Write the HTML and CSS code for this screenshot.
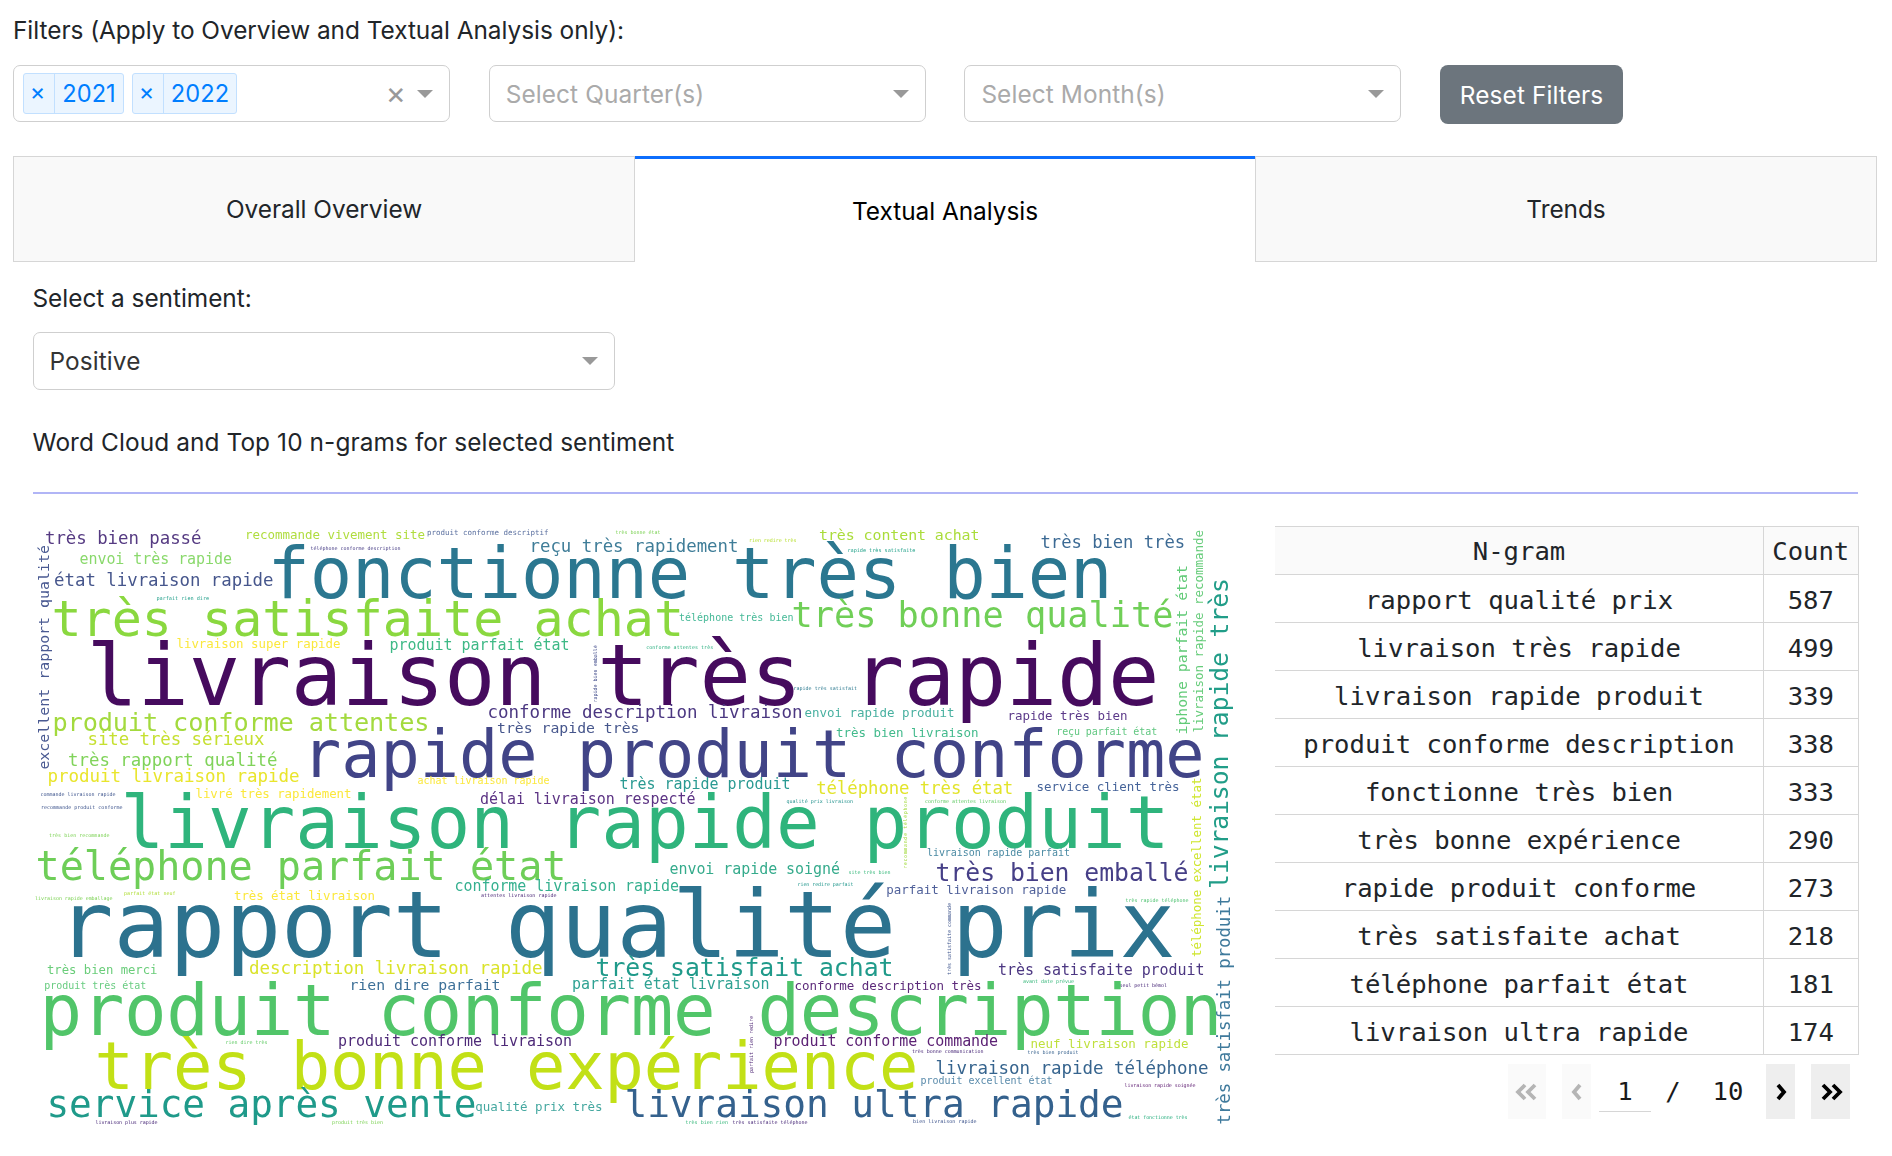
FILE: index.html
```html
<!DOCTYPE html>
<html lang="fr">
<head>
<meta charset="utf-8">
<title>Textual Analysis</title>
<link rel="stylesheet" href="styles.css">
</head>
<body>
<div class="app">
  <div class="line-label">Filters (Apply to Overview and Textual Analysis only):</div>
  <div class="filter-row">
    <div class="dd">
      <span class="chip"><span class="chip-x">×</span><span class="chip-val">2021</span></span>
      <span class="chip chip-b"><span class="chip-x">×</span><span class="chip-val">2022</span></span>
      <span class="dd-spacer"></span>
      <span class="dd-clear">×</span>
      <span class="dd-arrow"></span>
    </div>
    <div class="dd dd-plain"><span class="dd-ph">Select Quarter(s)</span><span class="dd-spacer"></span><span class="dd-arrow"></span></div>
    <div class="dd dd-plain"><span class="dd-ph">Select Month(s)</span><span class="dd-spacer"></span><span class="dd-arrow"></span></div>
    <button class="reset" type="button">Reset Filters</button>
  </div>

  <div class="tabs">
    <div class="tab">Overall Overview</div>
    <div class="tab tab-active">Textual Analysis</div>
    <div class="tab">Trends</div>
  </div>

  <div class="panel">
    <div class="line-label sent-label">Select a sentiment:</div>
    <div class="dd dd-plain dd-sent"><span class="dd-val">Positive</span><span class="dd-spacer"></span><span class="dd-arrow"></span></div>
    <div class="line-label wc-title">Word Cloud and Top 10 n-grams for selected sentiment</div>
    <div class="rule"></div>

    <div class="content">
      <svg class="wc" width="1210" height="626" viewBox="32.5 516 1210 624.5" preserveAspectRatio="none" role="img" aria-label="Word cloud">
        <text x="44.5" y="544" font-size="17.4" textLength="156.5" fill="#553a82">très bien passé</text>
        <text x="244.6" y="539" font-size="12.5" textLength="180" fill="#b0dd3f">recommande vivement site</text>
        <text x="426.5" y="535" font-size="7.5" textLength="121.5" fill="#5a6f9f">produit conforme descriptif</text>
        <text x="615" y="534" font-size="5" textLength="45" fill="#7ad151">très bonne état</text>
        <text x="310" y="550" font-size="5" textLength="90" fill="#443983">téléphone conforme description</text>
        <text x="267" y="598" font-size="70.5" textLength="845" fill="#2b7790">fonctionne très bien</text>
        <text x="529" y="552" font-size="17.4" textLength="209" fill="#3f7d98">reçu très rapidement</text>
        <text x="818.5" y="540" font-size="14.9" textLength="160.5" fill="#aadc3a">très content achat</text>
        <text x="1040" y="548" font-size="17.2" textLength="144.6" fill="#3c6a94">très bien très</text>
        <text x="748.5" y="542" font-size="5" textLength="47.5" fill="#b5de2b">rien redire très</text>
        <text x="847" y="552" font-size="5.2" textLength="68" fill="#1fa088">rapide très satisfaite</text>
        <text x="1202.5" y="732" font-size="12.5" textLength="202" transform="rotate(-90 1202.5 732)" fill="#66cc7a">livraison rapide recommande</text>
        <text x="1187" y="734" font-size="14.8" textLength="169" transform="rotate(-90 1187 734)" fill="#62cb78">iphone parfait état</text>
        <text x="1228" y="888" font-size="24.6" textLength="310" transform="rotate(-90 1228 888)" fill="#219d88">livraison rapide très</text>
        <text x="1230" y="1123" font-size="17.3" textLength="228" transform="rotate(-90 1230 1123)" fill="#3f7a9c">très satisfait produit</text>
        <text x="1201" y="956" font-size="12.4" textLength="179" transform="rotate(-90 1201 956)" fill="#cfe62f">téléphone excellent état</text>
        <text x="51" y="636" font-size="50" textLength="632.6" fill="#8ad83f">très satisfaite achat</text>
        <text x="678.5" y="620.7" font-size="10" textLength="114.5" fill="#45b997">téléphone très bien</text>
        <text x="791" y="627" font-size="35.3" textLength="382" fill="#70cf57">très bonne qualité</text>
        <text x="53.6" y="586" font-size="17.4" textLength="219.4" fill="#46568c">état livraison rapide</text>
        <text x="79" y="564" font-size="15" textLength="152.5" fill="#8ad96c">envoi très rapide</text>
        <text x="48.5" y="769" font-size="14.9" textLength="224" transform="rotate(-90 48.5 769)" fill="#4a5a92">excellent rapport qualité</text>
        <text x="156" y="600" font-size="5.2" textLength="52.6" fill="#1f9e89">parfait rien dire</text>
        <text x="86" y="705" font-size="85.5" textLength="1073" fill="#460b5e">livraison très rapide</text>
        <text x="176" y="648" font-size="12.4" textLength="164" fill="#fbe83c">livraison super rapide</text>
        <text x="389" y="650" font-size="15" textLength="180" fill="#3eb986">produit parfait état</text>
        <text x="596.5" y="702" font-size="5" textLength="57" transform="rotate(-90 596.5 702)" fill="#3e4989">rapide bien emballé</text>
        <text x="487" y="718" font-size="17.5" textLength="315" fill="#4b3781">conforme description livraison</text>
        <text x="804" y="717" font-size="12.5" textLength="150" fill="#48b0a0">envoi rapide produit</text>
        <text x="1007" y="720" font-size="12.5" textLength="120" fill="#5c3a8a">rapide très bien</text>
        <text x="645.7" y="649" font-size="5" textLength="67" fill="#29af7f">conforme attentes très</text>
        <text x="793" y="690" font-size="5" textLength="63.5" fill="#2a788e">rapide très satisfait</text>
        <text x="52" y="730" font-size="25.3" textLength="377" fill="#a3da3e">produit conforme attentes</text>
        <text x="87" y="744" font-size="17.4" textLength="177" fill="#c6e030">site très sérieux</text>
        <text x="496.5" y="732.7" font-size="14.8" textLength="142.5" fill="#46568c">très rapide très</text>
        <text x="301.5" y="776" font-size="65.3" textLength="902.5" fill="#414487">rapide produit conforme</text>
        <text x="835.5" y="736.7" font-size="12.5" textLength="142.5" fill="#42ba8c">très bien livraison</text>
        <text x="1055.7" y="734" font-size="10" textLength="101" fill="#60c780">reçu parfait état</text>
        <text x="67.5" y="765" font-size="17.4" textLength="209.5" fill="#80d35a">très rapport qualité</text>
        <text x="47" y="781.7" font-size="17.5" textLength="252" fill="#e9e52c">produit livraison rapide</text>
        <text x="417" y="783" font-size="10" textLength="132" fill="#fbe83c">achat livraison rapide</text>
        <text x="619" y="788" font-size="15" textLength="171" fill="#2a9a92">très rapide produit</text>
        <text x="815.7" y="793" font-size="17.3" textLength="197" fill="#e2e42a">téléphone très état</text>
        <text x="1036" y="790.7" font-size="12.5" textLength="143" fill="#46649a">service client très</text>
        <text x="40" y="795" font-size="5" textLength="75" fill="#3b528b">commande livraison rapide</text>
        <text x="195" y="797" font-size="12.4" textLength="156" fill="#fbe83c">livré très rapidement</text>
        <text x="479.5" y="803" font-size="15" textLength="215.5" fill="#5c3384">délai livraison respecté</text>
        <text x="786" y="802.7" font-size="5" textLength="66.5" fill="#21918c">qualité prix livraison</text>
        <text x="924.5" y="802.7" font-size="5" textLength="81" fill="#5ec962">conforme attentes livraison</text>
        <text x="40.5" y="808" font-size="5" textLength="81.5" fill="#3b528b">recommande produit conforme</text>
        <text x="48.5" y="836.7" font-size="5" textLength="60.5" fill="#7ad151">très bien recommande</text>
        <text x="907" y="868" font-size="5" textLength="72" transform="rotate(-90 907 868)" fill="#a0da39">recommande téléphone</text>
        <text x="120" y="847.7" font-size="72.7" textLength="1049" fill="#2fb47c">livraison rapide produit</text>
        <text x="35" y="879" font-size="40.2" textLength="531" fill="#6ece58">téléphone parfait état</text>
        <text x="454" y="890" font-size="15" textLength="224.5" fill="#35b08f">conforme livraison rapide</text>
        <text x="669" y="873" font-size="15" textLength="170.5" fill="#35ab8c">envoi rapide soigné</text>
        <text x="848" y="873" font-size="5" textLength="42" fill="#35b779">site très bien</text>
        <text x="926.5" y="855" font-size="10" textLength="143" fill="#4a8aa3">livraison rapide parfait</text>
        <text x="935" y="880" font-size="24.8" textLength="253" fill="#463f87">très bien emballé</text>
        <text x="885.7" y="893" font-size="12.5" textLength="180" fill="#50619a">parfait livraison rapide</text>
        <text x="797" y="885" font-size="5" textLength="56" fill="#1f968b">rien redire parfait</text>
        <text x="34.6" y="899" font-size="5" textLength="77.4" fill="#7ad151">livraison rapide emballage</text>
        <text x="123.6" y="894" font-size="5" textLength="51.4" fill="#addc30">parfait état neuf</text>
        <text x="233.5" y="899" font-size="12.4" textLength="141" fill="#fbe83c">très état livraison</text>
        <text x="480.6" y="896" font-size="5" textLength="75.4" fill="#482475">attentes livraison rapide</text>
        <text x="57" y="956" font-size="93" textLength="1118" fill="#2c728e">rapport qualité prix</text>
        <text x="1125" y="900.7" font-size="5" textLength="63" fill="#4ac16d">très rapide téléphone</text>
        <text x="951" y="974" font-size="5" textLength="72" transform="rotate(-90 951 974)" fill="#3b528b">très satisfaite commande</text>
        <text x="46.5" y="972.7" font-size="12.3" textLength="110.5" fill="#6acd7a">très bien merci</text>
        <text x="248.5" y="972.7" font-size="17.5" textLength="293.5" fill="#dae32a">description livraison rapide</text>
        <text x="595" y="975" font-size="24.8" textLength="298" fill="#1f9a8a">très satisfait achat</text>
        <text x="997.6" y="974" font-size="15" textLength="206.4" fill="#4c3782">très satisfaite produit</text>
        <text x="43.7" y="988" font-size="10" textLength="102" fill="#68cc80">produit très état</text>
        <text x="349" y="989" font-size="14.8" textLength="151" fill="#3d7098">rien dire parfait</text>
        <text x="571.6" y="988" font-size="15" textLength="197.4" fill="#2fa293">parfait état livraison</text>
        <text x="794" y="989" font-size="12.5" textLength="187" fill="#5c2a7a">conforme description très</text>
        <text x="1022.5" y="981.7" font-size="5" textLength="51" fill="#35b779">avant date prévue</text>
        <text x="1119" y="986" font-size="5" textLength="47.5" fill="#482878">seul petit bémol</text>
        <text x="39" y="1034" font-size="70.8" textLength="1183" fill="#51c569">produit conforme description</text>
        <text x="225" y="1043" font-size="5" textLength="42" fill="#5ec962">rien dire très</text>
        <text x="337.5" y="1045" font-size="15" textLength="234" fill="#4e2a78">produit conforme livraison</text>
        <text x="773" y="1045" font-size="15" textLength="224.6" fill="#5c2274">produit conforme commande</text>
        <text x="1030" y="1046.7" font-size="12.5" textLength="158" fill="#bfe03c">neuf livraison rapide</text>
        <text x="753" y="1071.7" font-size="5" textLength="57" transform="rotate(-90 753 1071.7)" fill="#481f70">parfait rien redire</text>
        <text x="911.4" y="1052" font-size="5" textLength="71.6" fill="#482878">très bonne communication</text>
        <text x="1027" y="1053" font-size="5" textLength="51" fill="#35608d">très bien produit</text>
        <text x="94" y="1087.2" font-size="65.4" textLength="824" fill="#c2e016">très bonne expérience</text>
        <text x="935" y="1072.7" font-size="17.5" textLength="273" fill="#36648e">livraison rapide téléphone</text>
        <text x="920" y="1083" font-size="10" textLength="132" fill="#5a8bab">produit excellent état</text>
        <text x="1124" y="1085.7" font-size="5" textLength="71" fill="#5c1a70">livraison rapide soignée</text>
        <text x="46" y="1116" font-size="37.7" textLength="430" fill="#1f9a8a">service après vente</text>
        <text x="474.7" y="1110" font-size="12.5" textLength="127.3" fill="#45a8a0">qualité prix très</text>
        <text x="624" y="1116" font-size="37.8" textLength="499" fill="#34618d">livraison ultra rapide</text>
        <text x="1128" y="1118" font-size="5" textLength="59" fill="#29af7f">état fonctionne très</text>
        <text x="95" y="1123" font-size="5" textLength="62" fill="#482878">livraison plus rapide</text>
        <text x="331.6" y="1123" font-size="5" textLength="51" fill="#7ad151">produit très bien</text>
        <text x="685" y="1123" font-size="5" textLength="42.5" fill="#35b779">très bien rien</text>
        <text x="732" y="1123" font-size="5" textLength="75" fill="#482878">très satisfaite téléphone</text>
        <text x="912.6" y="1122" font-size="5" textLength="63.4" fill="#3b528b">bien livraison rapide</text>
      </svg>

      <div class="side">
        <table class="grid">
          <thead><tr><th class="c-gram">N-gram</th><th class="c-count">Count</th></tr></thead>
          <tbody>
            <tr><td>rapport qualité prix</td><td>587</td></tr>
            <tr><td>livraison très rapide</td><td>499</td></tr>
            <tr><td>livraison rapide produit</td><td>339</td></tr>
            <tr><td>produit conforme description</td><td>338</td></tr>
            <tr><td>fonctionne très bien</td><td>333</td></tr>
            <tr><td>très bonne expérience</td><td>290</td></tr>
            <tr><td>rapide produit conforme</td><td>273</td></tr>
            <tr><td>très satisfaite achat</td><td>218</td></tr>
            <tr><td>téléphone parfait état</td><td>181</td></tr>
            <tr><td>livraison ultra rapide</td><td>174</td></tr>
          </tbody>
        </table>
        <div class="pager">
          <span class="pg pg-wide pg-off"><svg width="24" height="20" viewBox="0 0 24 20"><path d="M10 3 3 10l7 7M20 3l-7 7 7 7"/></svg></span>
          <span class="pg pg-off pg-prev"><svg width="12" height="20" viewBox="0 0 12 20"><path d="M9 3 3 10l6 7"/></svg></span>
          <span class="pg-input">1</span>
          <span class="pg-slash">/</span>
          <span class="pg-total">10</span>
          <span class="pg"><svg width="12" height="20" viewBox="0 0 12 20"><path d="m3 3 6 7-6 7"/></svg></span>
          <span class="pg pg-wide pg-last"><svg width="24" height="20" viewBox="0 0 24 20"><path d="m4 3 7 7-7 7M14 3l7 7-7 7"/></svg></span>
        </div>
      </div>
    </div>
  </div>
</div>
</body>
</html>
```

FILE: styles.css
```css
* { box-sizing: border-box; }
html, body { margin: 0; padding: 0; background: #fff; }
body {
  font-family: Inter, "Liberation Sans", sans-serif;
  font-size: 24.4px;
  letter-spacing: -0.03px;
  color: #212529;
}
.app { padding: 11px 15px 0 13px; width: 1892px; }
.line-label { line-height: 38px; height: 38px; }

.filter-row { display: flex; align-items: flex-start; margin-top: 16px; }
.dd {
  display: flex; align-items: center;
  width: 437px; height: 57px; padding: 0 16px 0 9px;
  margin-right: 38.7px;
  border: 1px solid #cfcfcf; border-radius: 7px; background: #fff;
  letter-spacing: 0.1px;
}
.dd-plain { padding-left: 16px; }
.dd-spacer { flex: 1; }
.dd-ph { color: #aaa; }
.dd-val { color: #333; }
.dd-arrow {
  width: 0; height: 0;
  border-left: 8px solid transparent; border-right: 8px solid transparent;
  border-top: 8px solid #999;
}
.dd-clear { color: #999; font-size: 31px; line-height: 1; margin-right: 11px; margin-top: -2px; }
.chip {
  display: flex; height: 41px; font-size: 23.6px;
  border: 1px solid #c2e0ff; border-radius: 3px;
  background: #ebf5ff; color: #007eff;
}
.chip-b { margin-left: 8px; }
.chip-x { width: 31px; padding-right: 3px; line-height: 36px; text-align: center; border-right: 1px solid #c2e0ff; }
.chip-val { width: 68px; line-height: 39px; text-align: center; }
.chip-b .chip-val { width: 72px; }
.reset {
  width: 183px; height: 59px; border: 0; border-radius: 8px;
  background: #6c757d; color: #fff;
  font: inherit; letter-spacing: 0.1px;
}

.tabs { display: flex; margin-top: 32px; }
.tab {
  flex: 1; height: 106px; line-height: 104px; text-align: center;
  background: #f9f9f9; border: 1px solid #d6d6d6; color: #212529;
}
.tab-active {
  background: #fff; color: #000; border: 0;
  border-top: 3px solid #0d6efd;
}

.panel { padding: 0 19px 0 19.5px; }
.sent-label { margin-top: 17px; }
.dd-sent { width: 582px; height: 58px; margin: 15px 0 0; }
.wc-title { margin-top: 33px; letter-spacing: 0.1px; }
.rule { height: 2px; margin-top: 31px; background: #b1b5f6; }

.content { display: flex; align-items: flex-start; margin-top: 22px; }
.wc { display: block; flex: none; filter: blur(0.7px); }
.wc text { font-family: "DejaVu Sans Mono", monospace; letter-spacing: 0; }
.side { flex: none; width: 583px; margin: 10px 0 0 32.5px; font-family: "DejaVu Sans Mono", monospace; font-size: 25.6px; letter-spacing: 0; }

.grid { width: 100%; table-layout: fixed; border-collapse: collapse; }
.grid th, .grid td {
  height: 48px; padding: 2px 0 0; text-align: center; font-weight: 400;
  border-top: 1px solid #d6d6d6; border-bottom: 1px solid #d6d6d6; border-right: 1px solid #d6d6d6;
  white-space: nowrap;
}
.grid th { background: #fafafa; padding-top: 0; }
.c-gram { width: 488.5px; }
.c-count { width: 94.5px; }

.pager { display: flex; align-items: flex-start; justify-content: flex-end; height: 55px; margin-top: 9px; padding-right: 8px; color: #1a1a1a; }
.pg { display: flex; align-items: center; justify-content: center; width: 29px; height: 55px; background: #eee; }
.pg svg { fill: none; stroke: #000; stroke-width: 3.8; }
.pg-wide { width: 38px; }
.pg-off { background: #fafafa; }
.pg-off svg { stroke: #b5b5b5; }
.pg-prev { margin-left: 16px; }
.pg-input { width: 52px; margin-left: 8px; height: 48px; line-height: 55px; text-align: center; border-bottom: 1px solid #d6d6d6; }
.pg-slash { width: 44px; text-align: center; line-height: 55px; }
.pg-total { width: 66px; text-align: center; line-height: 55px; margin-right: 5px; }
.pg-last { margin-left: 16px; width: 39px; }
```
